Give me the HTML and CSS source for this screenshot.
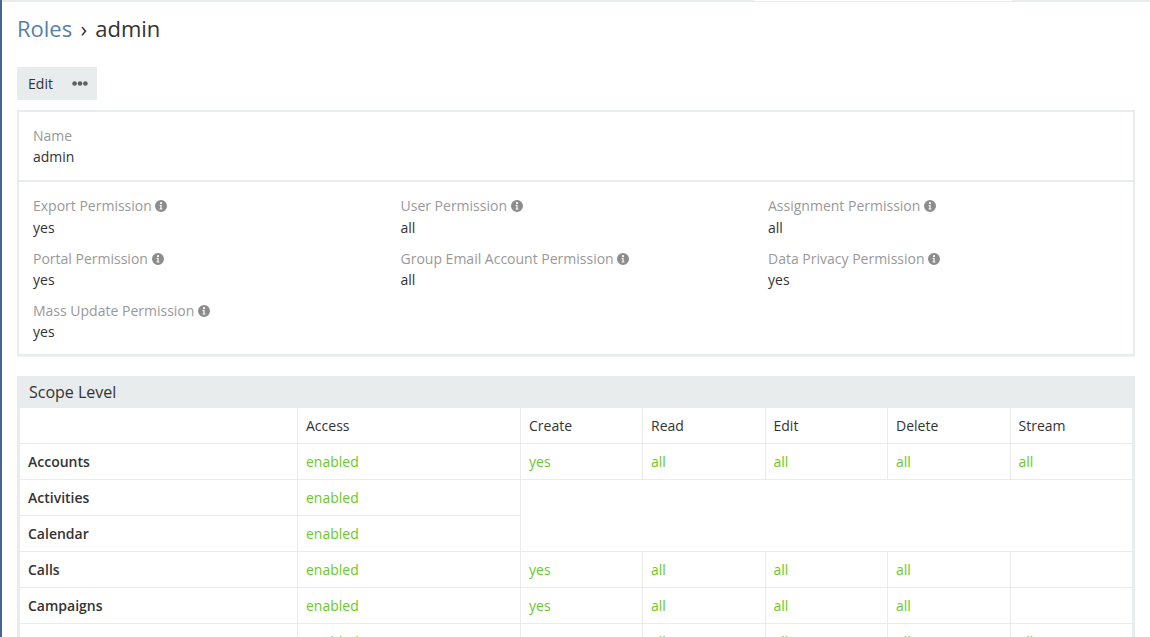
FILE: index.html
```html
<!DOCTYPE html>
<html lang="en">
<head>
<meta charset="utf-8">
<title>Roles - admin</title>
<link rel="stylesheet" href="styles.css">
</head>
<body>
<div class="topbar"><div class="topbar-gap"></div></div>
<main class="page">
  <h1 class="title"><a class="crumb" href="#">Roles</a> <span class="sep">›</span> admin</h1>
  <div class="actions">
    <button class="btn" type="button">Edit</button>
    <button class="btn btn-more" type="button" aria-label="More">
      <svg class="dots" width="16" height="5" viewBox="0 0 16 5"><circle cx="2.6" cy="2.5" r="2.3"/><circle cx="8" cy="2.5" r="2.3"/><circle cx="13.4" cy="2.5" r="2.3"/></svg>
    </button>
  </div>

  <section class="panel">
    <div class="panel-row name-row">
      <div class="field">
        <div class="label">Name</div>
        <div class="value">admin</div>
      </div>
    </div>
    <div class="panel-row perms">
      <div class="field"><div class="label">Export Permission <svg class="info" viewBox="0 0 12 12"><use href="#i"/></svg></div><div class="value">yes</div></div>
      <div class="field"><div class="label">User Permission <svg class="info" viewBox="0 0 12 12"><use href="#i"/></svg></div><div class="value">all</div></div>
      <div class="field"><div class="label">Assignment Permission <svg class="info" viewBox="0 0 12 12"><use href="#i"/></svg></div><div class="value">all</div></div>
      <div class="field"><div class="label">Portal Permission <svg class="info" viewBox="0 0 12 12"><use href="#i"/></svg></div><div class="value">yes</div></div>
      <div class="field"><div class="label">Group Email Account Permission <svg class="info" viewBox="0 0 12 12"><use href="#i"/></svg></div><div class="value">all</div></div>
      <div class="field"><div class="label">Data Privacy Permission <svg class="info" viewBox="0 0 12 12"><use href="#i"/></svg></div><div class="value">yes</div></div>
      <div class="field"><div class="label">Mass Update Permission <svg class="info" viewBox="0 0 12 12"><use href="#i"/></svg></div><div class="value">yes</div></div>
    </div>
  </section>

  <section class="panel table-panel">
    <h2 class="panel-heading">Scope Level</h2>
    <table class="scopes">
      <colgroup><col class="c0"><col class="c1"><col class="c2"><col class="c3"><col class="c4"><col class="c5"><col class="c6"></colgroup>
      <thead>
        <tr><th></th><th>Access</th><th>Create</th><th>Read</th><th>Edit</th><th>Delete</th><th>Stream</th></tr>
      </thead>
      <tbody>
        <tr><td class="scope">Accounts</td><td class="on">enabled</td><td class="on">yes</td><td class="on">all</td><td class="on">all</td><td class="on">all</td><td class="on">all</td></tr>
        <tr><td class="scope">Activities</td><td class="on">enabled</td><td class="blank" colspan="5" rowspan="2"></td></tr>
        <tr><td class="scope">Calendar</td><td class="on">enabled</td></tr>
        <tr><td class="scope">Calls</td><td class="on">enabled</td><td class="on">yes</td><td class="on">all</td><td class="on">all</td><td class="on">all</td><td></td></tr>
        <tr><td class="scope">Campaigns</td><td class="on">enabled</td><td class="on">yes</td><td class="on">all</td><td class="on">all</td><td class="on">all</td><td></td></tr>
        <tr><td class="scope">Cases</td><td class="on">enabled</td><td class="on">yes</td><td class="on">all</td><td class="on">all</td><td class="on">all</td><td class="on">all</td></tr>
      </tbody>
    </table>
  </section>
</main>
<svg class="defs" width="0" height="0" aria-hidden="true">
  <symbol id="i" viewBox="0 0 12 12">
    <path fill-rule="evenodd" d="M6 0a6 6 0 1 1 0 12A6 6 0 0 1 6 0zM6 2.1a1.1 1.1 0 1 0 0 2.2 1.1 1.1 0 0 0 0-2.2zM4.6 5v1h.8v2.4h-.8v1h2.8v-1h-.8V5z"/>
  </symbol>
</svg>
</body>
</html>
```
FILE: styles.css
```css
html, body {
  margin: 0;
  height: 637px;
  overflow: hidden;
  background: #fff;
}
body {
  font-family: "Open Sans", sans-serif;
  font-size: 14px;
  line-height: 20px;
  color: #333;
  border-left: 2px solid #4a6491;
  box-sizing: border-box;
}
.topbar {
  height: 2px;
  background: #e8eced;
  margin-left: -2px;
  padding-left: 754px;
}
.topbar-gap {
  width: 258px;
  height: 1px;
  background: #fff;
}
.page {
  padding: 0 15px;
}
.title {
  margin: 0;
  padding-top: 11px;
  height: 54px;
  font-size: 22px;
  line-height: 30px;
  font-weight: 400;
  color: #333;
}
.crumb {
  color: #5580ab;
  text-decoration: none;
}
.sep {
  padding: 0 2.5px;
}
.actions {
  display: flex;
  width: 80px;
  height: 33px;
  background: #e8eced;
}
.btn {
  border: 0;
  background: none;
  font: inherit;
  color: #333;
  padding: 0;
  height: 33px;
}
.btn:first-child {
  width: 47px;
}
.btn-more {
  width: 33px;
  display: flex;
  align-items: center;
  padding-left: 8px;
}
.dots {
  fill: #5d6064;
}
.panel {
  margin-top: 10px;
  border: 2px solid #e8eced;
  width: 1118px;
  box-sizing: border-box;
  background: #fff;
  box-shadow: 0 1px 0 #f1f3f3;
}
.panel-row + .panel-row {
  border-top: 2px solid #e8eced;
}
.name-row {
  padding: 14px 14px 13px;
  height: 68px;
  box-sizing: border-box;
}
.perms {
  display: grid;
  grid-template-columns: 367.5px 367.5px 1fr;
  row-gap: 10px;
  padding: 14.4px 14px 11px;
}
.field {
  min-height: 42.2px;
}
.label {
  color: #999;
  height: 21.4px;
}
.value {
  color: #333;
  height: 20.8px;
}
.name-row .field .label {
  height: 21px;
}
.info {
  width: 12px;
  height: 12px;
  fill: #8c8c8c;
  vertical-align: -1px;
}
.defs {
  position: absolute;
}
.table-panel {
  margin-top: 20px;
  border: 3px solid #e8eced;
  border-top: 0;
  overflow: hidden;
}
.panel-heading {
  margin: 0 -3px;
  background: #e8eced;
  height: 32px;
  padding: 2px 12px 0;
  box-sizing: border-box;
  font-size: 16px;
  line-height: 29px;
  font-weight: 400;
}
.scopes {
  border-collapse: collapse;
  table-layout: fixed;
  width: 1112px;
}
.c0 { width: 277.5px; }
.c1 { width: 223px; }
.c2 { width: 122px; }
.c3 { width: 122.5px; }
.c4 { width: 122.5px; }
.c5 { width: 122.5px; }
.scopes th, .scopes td {
  height: 36px;
  box-sizing: border-box;
  padding: 0 8px;
  border: 1px solid #e8eced;
  font-weight: 400;
  text-align: left;
}
.scopes th:first-child, .scopes td:first-child { border-left: 0; }
.scopes tr > :last-child { border-right: 0; }
.scopes thead th { border-top: 0; }
.scopes .scope {
  font-weight: 600;
}
.scopes .on {
  color: #6bc924;
}
```
